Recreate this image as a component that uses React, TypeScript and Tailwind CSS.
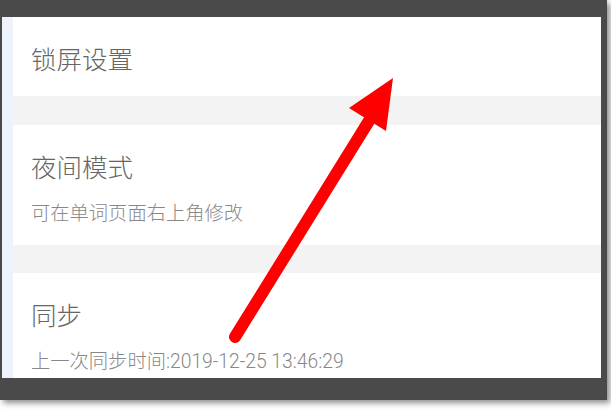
import React from "react";

const font = { fontFamily: 'Roboto, "Noto Sans CJK SC", sans-serif' };

function Title({ children }: { children: React.ReactNode }) {
  return (
    <div className="text-[25.5px] leading-[30px] font-light text-[#666666] whitespace-nowrap">{children}</div>
  );
}

function Sub({ children }: { children: React.ReactNode }) {
  return (
    <div className="mt-[19px] text-[19.3px] leading-[24px] font-light text-[#888888] whitespace-nowrap">{children}</div>
  );
}

export default function App() {
  return (
    <div className="relative w-[611px] h-[411px] bg-white overflow-hidden" style={font}>
      <div className="flex flex-col w-[607px] h-[400px] bg-[#4a4a4a] shadow-[3px_3px_6px_rgba(0,0,0,0.45)]">
        <div className="h-[17px] shrink-0" />
        <div className="flex flex-1 min-h-0">
          <div className="w-[2px] shrink-0" />
          <div className="w-[11px] shrink-0 bg-[#eef3fb]" />
          <div className="flex-1 flex flex-col overflow-hidden bg-[#f3f3f3]">
            <div className="h-[79px] shrink-0 bg-white pl-[18px] pt-[28px]">
              <Title>锁屏设置</Title>
            </div>
            <div className="h-[29px] shrink-0" />
            <div className="h-[120px] shrink-0 bg-white pl-[18px] pt-[28px]">
              <Title>夜间模式</Title>
              <Sub>可在单词页面右上角修改</Sub>
            </div>
            <div className="h-[28px] shrink-0" />
            <div className="h-[120px] shrink-0 bg-white pl-[18px] pt-[28px]">
              <Title>同步</Title>
              <Sub>上一次同步时间:2019-12-25 13:46:29</Sub>
            </div>
          </div>
          <div className="w-[6px] shrink-0" />
        </div>
        <div className="h-[22px] shrink-0" />
      </div>
      <svg className="absolute inset-0" width="611" height="411" viewBox="0 0 611 411">
        <line x1="235" y1="337" x2="372" y2="116" stroke="#ff0000" strokeWidth="12" strokeLinecap="round" />
        <polygon points="393,78 349,108 386,131" fill="#ff0000" />
      </svg>
    </div>
  );
}
